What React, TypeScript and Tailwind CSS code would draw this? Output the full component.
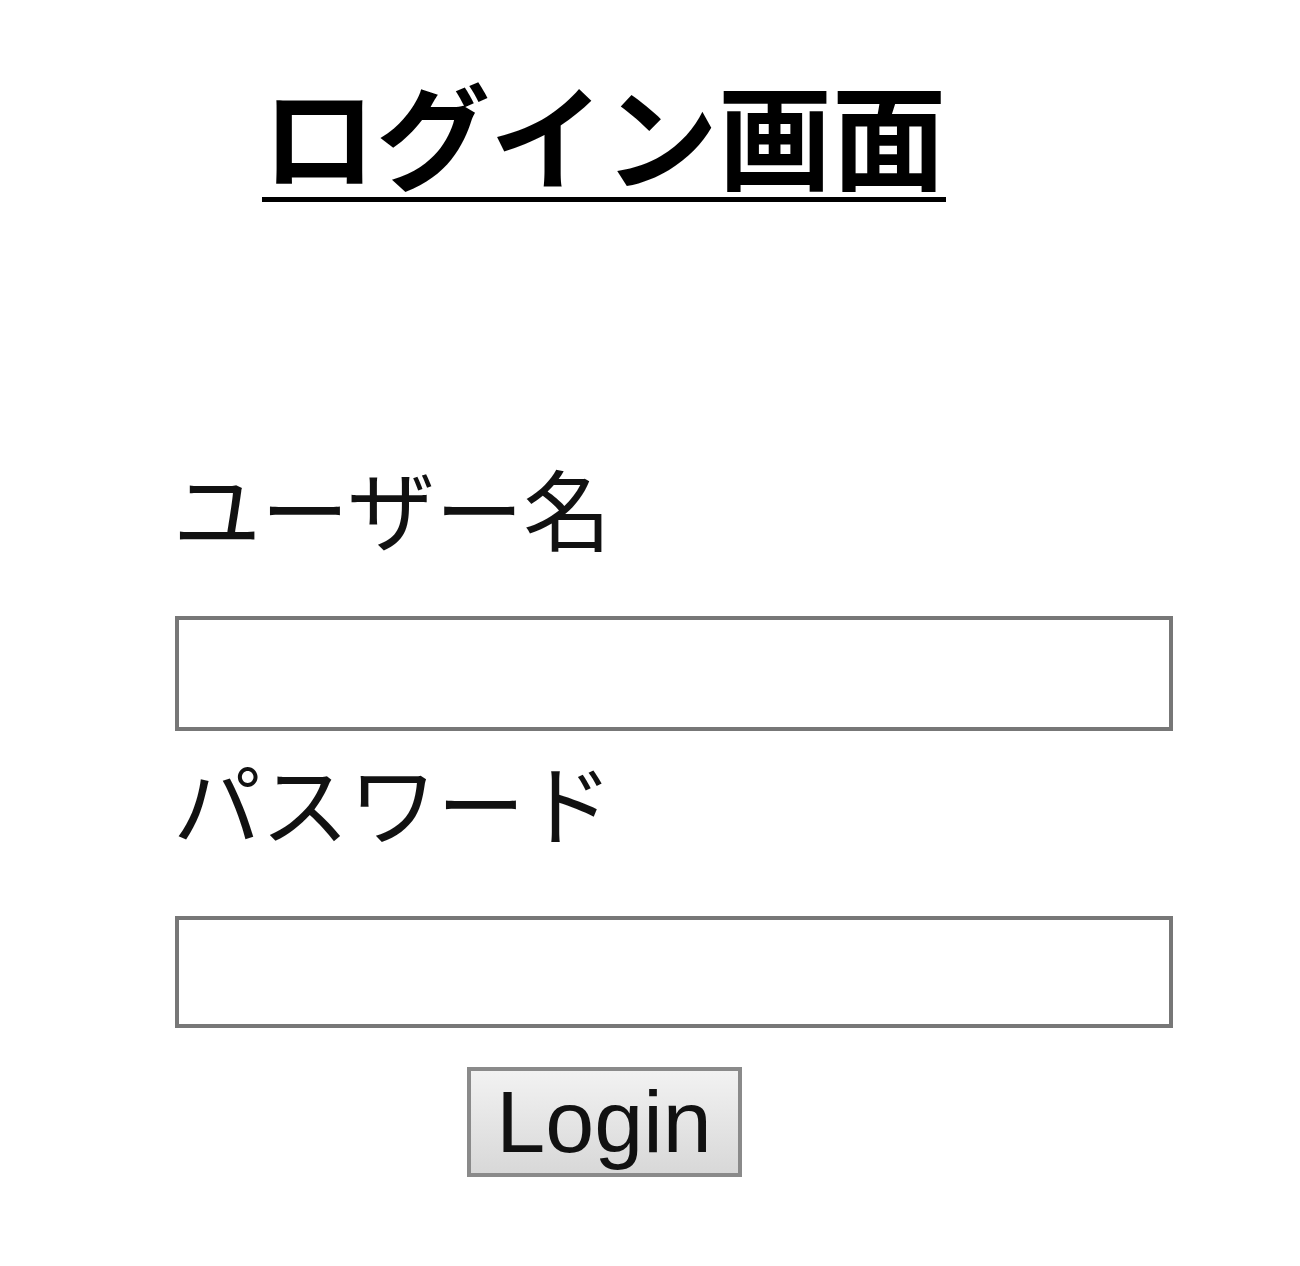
import React from "react";

const jp = { fontFamily: '"Noto Sans CJK JP", "Noto Sans", sans-serif' };

export default function App() {
  return (
    <div className="w-[1300px] h-[1266px] bg-white overflow-hidden">
      <div className="w-[1208px] flex flex-col">
        <div className="h-[72px]" />
        <h1
          style={jp}
          className="text-center text-[114px] leading-[120px] font-bold text-black underline decoration-[5px] underline-offset-[16px]"
        >
          ログイン画面
        </h1>
        <div className="h-[264px]" />
        <label style={jp} className="ml-[173px] text-[88px] leading-[100px] text-[#111]">
          ユーザー名
        </label>
        <input
          type="text"
          className="ml-[175px] mt-[60px] w-[998px] h-[115px] border-[4px] border-[#777777] bg-white outline-none"
        />
        <label style={jp} className="ml-[173px] mt-[19px] text-[88px] leading-[100px] text-[#111]">
          パスワード
        </label>
        <input
          type="password"
          className="ml-[175px] mt-[66px] w-[998px] h-[112px] border-[4px] border-[#777777] bg-white outline-none"
        />
        <div className="flex justify-center mt-[39px]">
          <button
            style={{ fontFamily: '"Liberation Sans", Arial, sans-serif' }}
            className="w-[275px] h-[110px] border-[4px] border-[#8a8a8a] bg-gradient-to-b from-[#f2f2f2] to-[#d8d8d8] text-[88px] leading-none text-[#111]"
          >
            Login
          </button>
        </div>
      </div>
    </div>
  );
}
